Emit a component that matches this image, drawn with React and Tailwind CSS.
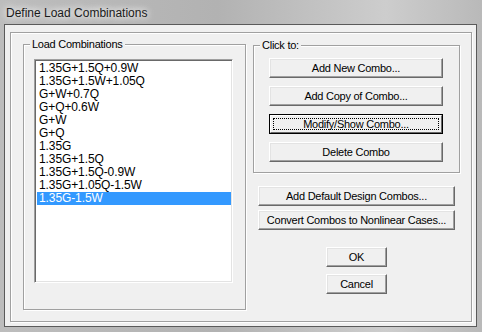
import React from "react";

const items = [
  "1.35G+1.5Q+0.9W",
  "1.35G+1.5W+1.05Q",
  "G+W+0.7Q",
  "G+Q+0.6W",
  "G+W",
  "G+Q",
  "1.35G",
  "1.35G+1.5Q",
  "1.35G+1.5Q-0.9W",
  "1.35G+1.05Q-1.5W",
  "1.35G-1.5W",
];

function Btn({ children, className = "" }) {
  return (
    <div
      className={
        "flex items-center justify-center bg-[#f0f0f0] border border-t-white border-l-white border-b-[#696969] border-r-[#696969] shadow-[inset_-1px_-1px_0_#a0a0a0,inset_1px_1px_0_#e3e3e3] text-[11px] tracking-[-0.25px] text-black leading-none " +
        className
      }
    >
      {children}
    </div>
  );
}

function FocusBtn({ children, className = "" }) {
  return (
    <div className={"border border-black " + className}>
      <div className="h-full flex items-center justify-center bg-[#f0f0f0] border border-t-white border-l-white border-b-[#696969] border-r-[#696969] p-[2px]">
        <div className="w-full h-full flex items-center justify-center border border-dotted border-black text-[11px] tracking-[-0.25px] leading-none">
          {children}
        </div>
      </div>
    </div>
  );
}

function Group({ label, className = "", children }) {
  return (
    <div
      className={
        "relative border border-[#a0a0a0] shadow-[1px_1px_0_white,inset_1px_1px_0_white] " +
        className
      }
    >
      <span className="absolute -top-[8px] left-[6px] bg-[#f0f0f0] px-[2px] text-[11px] tracking-[-0.25px] leading-[14px]">
        {label}
      </span>
      {children}
    </div>
  );
}

export default function App() {
  return (
    <div
      className="w-[482px] h-[332px] flex flex-col bg-[linear-gradient(90deg,#bdbdbd_0%,#b2b2b2_45%,#cdcdcd_80%,#b9b9b9_100%)] overflow-hidden"
      style={{ fontFamily: '"Liberation Sans", Arial, sans-serif' }}
    >
      <div className="h-[24px] shrink-0 flex items-center pl-[6px] pt-[1px]">
        <span className="text-[12px] text-[#1a1a1a] [text-shadow:0_0_6px_#ffffff,0_0_10px_#ffffff]">
          Define Load Combinations
        </span>
      </div>
      <div className="flex-1 pl-[4px] pr-[6px] pb-[5px] flex">
        <div className="flex-1 bg-[#f0f0f0] border border-[#5a5a5a] pt-[7px] pl-[5px] pr-[4px] pb-[4px] flex">
          <div className="flex-1 border border-[#a0a0a0] shadow-[1px_1px_0_white,inset_1px_1px_0_white] flex pt-[11px] pl-[12px] pr-[11px]">
            <Group label="Load Combinations" className="w-[223px] h-[266px] pt-[14px] pl-[10px] pr-[12px]">
              <div className="h-[224px] bg-white border border-t-[#a0a0a0] border-l-[#a0a0a0] border-r-white border-b-white shadow-[inset_1px_1px_0_#696969,inset_-1px_-1px_0_#e3e3e3] p-[2px] pr-[1px]">
                {items.map((t, i) => (
                  <div
                    key={t}
                    className={
                      "h-[13px] leading-[13px] pl-[2px] text-[12px] tracking-[-0.1px] whitespace-nowrap " +
                      (i === items.length - 1 ? "bg-[#3399ff] text-white" : "text-black")
                    }
                  >
                    {t}
                  </div>
                ))}
              </div>
            </Group>
            <div className="ml-[7px] flex-1 flex flex-col items-center">
              <Group label="Click to:" className="w-[207px] h-[128px] mt-[1px] pt-[12px] pl-[15px] pr-[16px] flex flex-col gap-[8px]">
                <Btn className="h-[20px]">Add New Combo...</Btn>
                <Btn className="h-[20px]">Add Copy of Combo...</Btn>
                <FocusBtn className="h-[20px]">Modify/Show Combo...</FocusBtn>
                <Btn className="h-[20px]">Delete Combo</Btn>
              </Group>
              <Btn className="mt-[13px] w-[197px] h-[20px]">Add Default Design Combos...</Btn>
              <Btn className="mt-[4px] w-[197px] h-[20px]">Convert Combos to Nonlinear Cases...</Btn>
              <Btn className="mt-[17px] w-[61px] h-[20px]">OK</Btn>
              <Btn className="mt-[7px] w-[61px] h-[20px]">Cancel</Btn>
            </div>
          </div>
        </div>
      </div>
    </div>
  );
}
